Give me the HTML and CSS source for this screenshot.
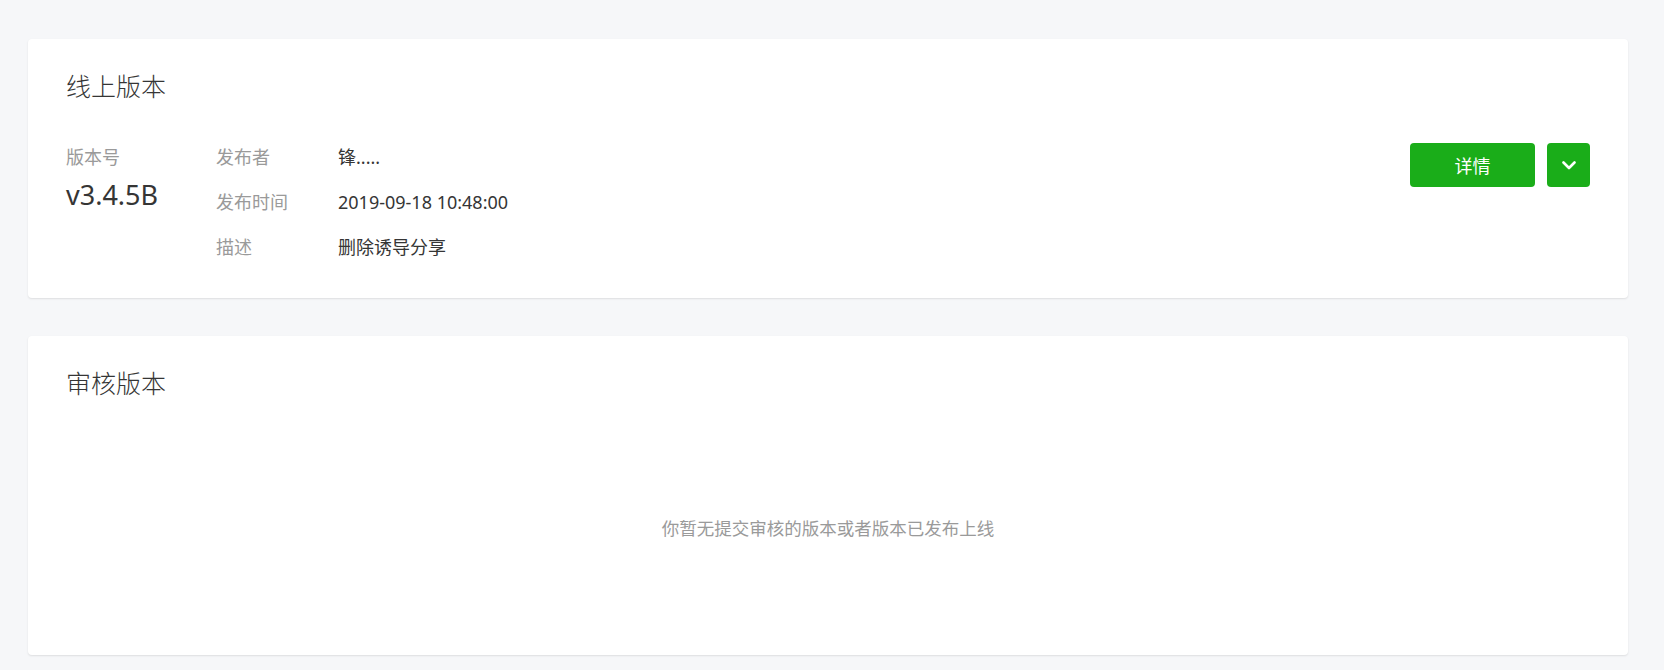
FILE: index.html
```html
<!DOCTYPE html>
<html lang="zh-CN">
<head>
<meta charset="utf-8">
<title>版本管理</title>
<link rel="stylesheet" href="styles.css">
</head>
<body>
<main class="page">
  <section class="card">
    <h2 class="card-title">线上版本</h2>
    <div class="version-body">
      <div class="version-id">
        <div class="label">版本号</div>
        <div class="version-num">v3.4.5B</div>
      </div>
      <dl class="meta">
        <div class="meta-row"><dt class="label">发布者</dt><dd class="value">锋.....</dd></div>
        <div class="meta-row"><dt class="label">发布时间</dt><dd class="value">2019-09-18 10:48:00</dd></div>
        <div class="meta-row"><dt class="label">描述</dt><dd class="value">删除诱导分享</dd></div>
      </dl>
      <div class="actions">
        <button class="btn btn-primary" type="button">详情</button>
        <button class="btn btn-icon" type="button" aria-label="更多">
          <svg width="14" height="9" viewBox="0 0 14 9"><path d="M1.5 1.5 L7 7 L12.5 1.5" fill="none" stroke="#fff" stroke-width="2.6" stroke-linecap="round" stroke-linejoin="round"/></svg>
        </button>
      </div>
    </div>
  </section>
  <section class="card card-review">
    <h2 class="card-title">审核版本</h2>
    <div class="empty">你暂无提交审核的版本或者版本已发布上线</div>
  </section>
</main>
</body>
</html>
```
FILE: styles.css
```css
* { box-sizing: border-box; }
html, body { margin: 0; padding: 0; }
body {
  background: #f6f7f9;
  font-family: "Noto Sans", "Noto Sans CJK SC", sans-serif;
  color: #353535;
}
.page {
  padding: 39px 36px 16px 28px;
  display: flex;
  flex-direction: column;
  gap: 38px;
}
.card {
  background: #fff;
  border-radius: 4px;
  box-shadow: 0 1px 2px rgba(0, 0, 0, 0.1);
  padding: 31px 38px 28px 38px;
}
.card-title {
  margin: 0;
  font-size: 25px;
  font-weight: 300;
  line-height: 32px;
  color: #353535;
}
.version-body {
  display: flex;
  margin-top: 33px;
}
.version-id {
  width: 150px;
  flex: none;
}
.label {
  color: #9a9a9a;
  font-size: 18px;
  line-height: 45px;
}
.version-num {
  font-size: 27px;
  line-height: 30px;
  color: #353535;
}
.meta {
  margin: 0;
  flex: 1;
}
.meta-row {
  display: flex;
}
.meta-row dt { width: 122px; flex: none; }
.meta-row dd {
  margin: 0;
  font-size: 18px;
  line-height: 45px;
  color: #353535;
}
.actions {
  display: flex;
  gap: 12px;
  margin-top: 8px;
  align-self: flex-start;
}
.btn {
  border: none;
  border-radius: 4px;
  background: #1aad19;
  color: #fff;
  height: 44px;
  font-family: inherit;
  font-size: 18px;
  cursor: pointer;
  display: flex;
  align-items: center;
  justify-content: center;
  padding: 0;
}
.btn-primary { width: 125px; }
.btn-icon { width: 43px; }
.card-review { padding-bottom: 0; }
.empty {
  height: 256px;
  display: flex;
  align-items: center;
  justify-content: center;
  font-size: 17.5px;
  color: #9a9a9a;
}
```
